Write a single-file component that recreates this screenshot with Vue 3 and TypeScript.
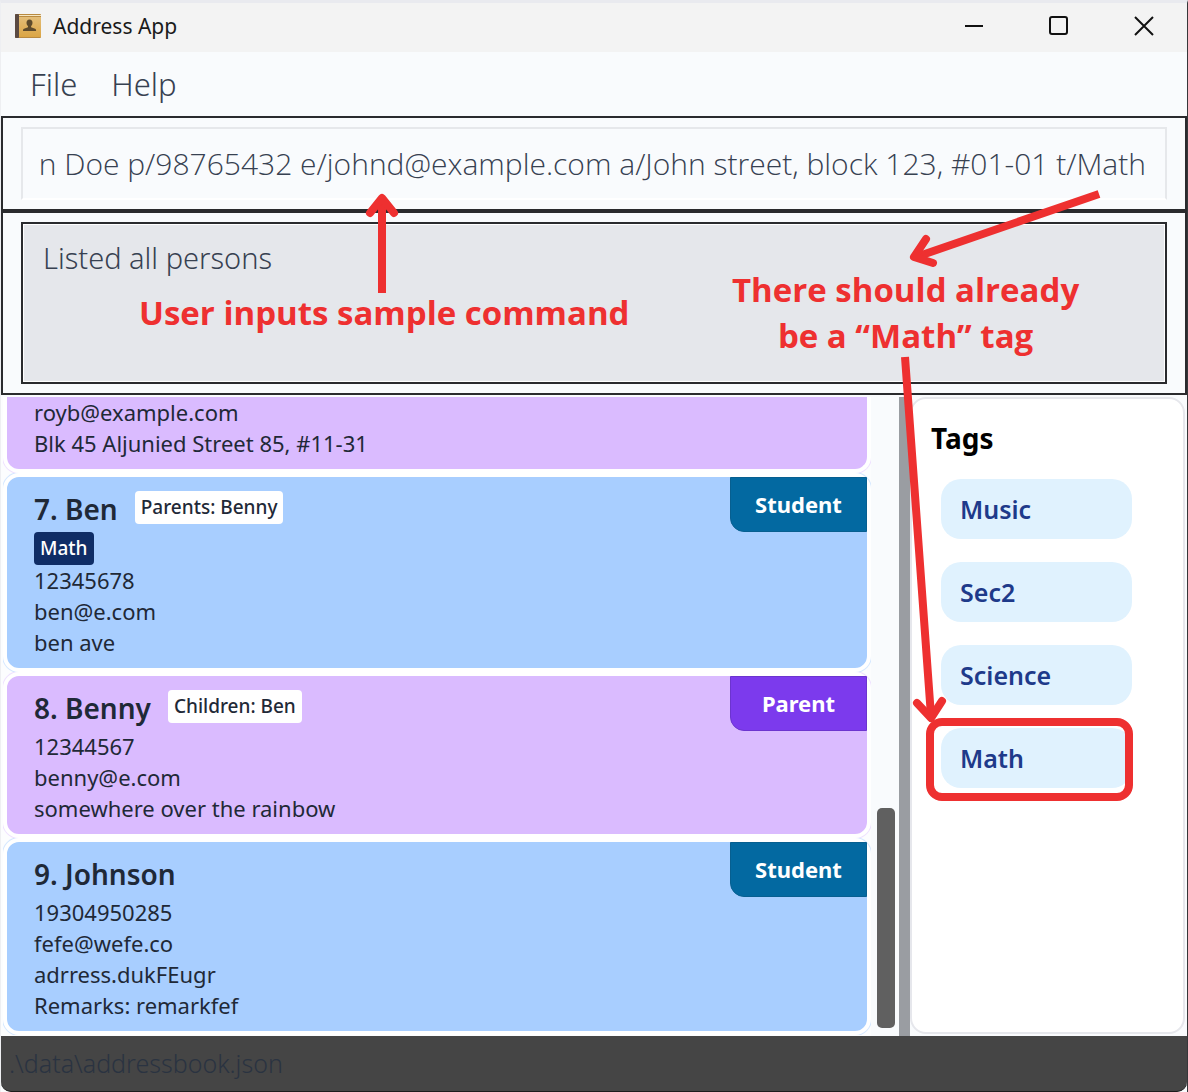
<script setup lang="ts">
import { onMounted, ref } from 'vue'

interface Person {
  name?: string
  role: 'Student' | 'Parent'
  relation?: string
  tags?: string[]
  details: string[]
}

const people: Person[] = [
  { role: 'Parent', details: ['royb@example.com', 'Blk 45 Aljunied Street 85, #11-31'] },
  {
    name: '7. Ben',
    role: 'Student',
    relation: 'Parents: Benny',
    tags: ['Math'],
    details: ['12345678', 'ben@e.com', 'ben ave'],
  },
  {
    name: '8. Benny',
    role: 'Parent',
    relation: 'Children: Ben',
    details: ['12344567', 'benny@e.com', 'somewhere over the rainbow'],
  },
  {
    name: '9. Johnson',
    role: 'Student',
    details: ['19304950285', 'fefe@wefe.co', 'adrress.dukFEugr', 'Remarks: remarkfef'],
  },
]

const tags = ['Music', 'Sec2', 'Science', 'Math']
const command = ref('John Doe p/98765432 e/johnd@example.com a/John street, block 123, #01-01 t/Math')
const commandBox = ref<HTMLInputElement | null>(null)

// Keep the end of the typed command in view.
onMounted(() => {
  if (commandBox.value) commandBox.value.scrollLeft = commandBox.value.scrollWidth
})
</script>

<template>
  <div class="window">
    <header class="titlebar">
      <svg class="book" viewBox="0 0 28 26" aria-hidden="true">
        <defs>
          <linearGradient id="cover" x1="0" y1="0" x2="0" y2="1">
            <stop offset="0" stop-color="#e3bd78" />
            <stop offset="1" stop-color="#dba544" />
          </linearGradient>
        </defs>
        <rect x="1" y="1" width="26" height="24" rx="1" fill="#b98a40" />
        <rect x="4" y="2" width="23" height="1" fill="#f6e7c2" />
        <rect x="5" y="4" width="22" height="20" fill="url(#cover)" />
        <rect x="1" y="1" width="4" height="24" rx="1" fill="#5b4a42" />
        <path d="M15.500 6.500c2 0 3 1.400 3 3.200 0 1.500-.6 2.700-1.400 3.400v1.200l4 1.500c.8.400 1 1 1 2.200H9c0-1.200.2-1.800 1-2.200l4-1.500v-1.200c-.9-.7-1.500-1.900-1.500-3.400 0-1.800 1-3.200 3-3.200z" fill="#5d4a2c" />
      </svg>
      <h1>Address App</h1>
      <div class="controls">
        <button type="button" aria-label="Minimize">
          <svg viewBox="0 0 20 20"><path d="M1 10h18" /></svg>
        </button>
        <button type="button" aria-label="Maximize">
          <svg viewBox="0 0 20 20"><rect x="1" y="1" width="17" height="17" rx="2" /></svg>
        </button>
        <button type="button" aria-label="Close">
          <svg viewBox="0 0 20 20"><path d="M1 1l18 18M19 1L1 19" /></svg>
        </button>
      </div>
    </header>

    <nav class="menu">
      <button type="button">File</button>
      <button type="button">Help</button>
    </nav>

    <section class="pane">
      <input ref="commandBox" v-model="command" class="command" type="text" aria-label="Command" />
    </section>
    <section class="pane result-pane">
      <div class="result">Listed all persons</div>
    </section>

    <main class="content">
      <ul class="people">
        <li v-for="(p, i) in people" :key="i">
          <article :class="['card', p.role.toLowerCase()]">
            <template v-if="p.name">
              <div class="heading">
                <h2>{{ p.name }}</h2>
                <span v-if="p.relation" class="relation">{{ p.relation }}</span>
              </div>
              <span class="role">{{ p.role }}</span>
            </template>
            <div v-if="p.tags" class="card-tags">
              <span v-for="t in p.tags" :key="t">{{ t }}</span>
            </div>
            <p v-for="d in p.details" :key="d">{{ d }}</p>
          </article>
        </li>
      </ul>
      <div class="gutter"><div class="thumb"></div></div>
      <div class="divider"></div>
      <aside class="tags">
        <h2>Tags</h2>
        <button v-for="t in tags" :key="t" type="button">{{ t }}</button>
      </aside>
    </main>

    <footer class="status">.\data\addressbook.json</footer>

    <p class="note note-input">User inputs sample command</p>
    <p class="note note-tag">There should already<br />be a “Math” tag</p>
    <svg class="marks" width="1188" height="1092" viewBox="0 0 1188 1092" aria-hidden="true">
      <path d="M382 293V200M1099 194L916 257M905 357L931 716" />
      <g stroke-linecap="round" stroke-linejoin="round">
        <path d="M370 213L382 198L394 213" />
        <path d="M926 239L914 257L933 263" />
        <path d="M917 703L931 718L942 701" />
      </g>
      <rect x="930" y="722" width="199" height="75" rx="12" />
    </svg>
  </div>
</template>

<style>
body {
  margin: 0;
  background: #f9fbfd;
}
</style>

<style scoped>
* {
  box-sizing: border-box;
}
h1,
h2,
p,
ul {
  margin: 0;
  padding: 0;
}
button {
  border: 0;
  padding: 0;
  background: none;
  font: inherit;
  color: inherit;
}
.window {
  position: relative;
  display: flex;
  flex-direction: column;
  min-height: 100vh;
  overflow: hidden;
  border-top: 3px solid #e9eaef;
  border-left: 1px solid #eeeff2;
  border-right: 1px solid #36373a;
  background: #f9fbfd;
  color: #1f2937;
  font-family: 'Noto Sans', 'Open Sans', sans-serif;
}
.titlebar {
  display: flex;
  align-items: center;
  height: 49px;
  padding: 0 0 4px 13px;
  background: #f3f3f3;
  color: #1a1a1a;
}
.book {
  width: 28px;
  height: 26px;
}
.titlebar h1 {
  margin-left: 11px;
  font-size: 21px;
  font-weight: 400;
}
.controls {
  display: flex;
  gap: 65px;
  margin: 0 33px 0 auto;
}
.controls button,
.controls svg {
  display: block;
  width: 20px;
  height: 20px;
}
.controls svg {
  fill: none;
  stroke: #111;
  stroke-width: 2;
}
.menu {
  display: flex;
  gap: 34px;
  height: 64px;
  padding-left: 29px;
  font-size: 31px;
  font-weight: 300;
  color: #374151;
}
.pane {
  padding: 9px 18px;
  border: 2px solid #2a2b2e;
}
.command {
  display: block;
  width: 100%;
  height: 73px;
  padding: 0 19px 0 17px;
  border: 2px solid #e6e8eb;
  border-bottom-color: #fff;
  background: #f9fbfd;
  color: #374151;
  font: 300 30px 'Open Sans', 'Noto Sans', sans-serif;
  outline: 0;
}
.result {
  height: 162px;
  padding: 12px 20px;
  border: 2px solid #2a2b2e;
  box-shadow: inset 0 0 0 1px #fff;
  background: #e5e7eb;
  color: #374151;
  font-size: 29px;
  font-weight: 300;
  line-height: 44px;
}
.content {
  flex: 1;
  display: flex;
  margin-top: 2px;
}
.people {
  flex: 1;
  display: flex;
  flex-direction: column;
  padding-left: 2px;
  background: #fcfdfe;
  list-style: none;
}
.people li {
  overflow: hidden;
}
.card {
  position: relative;
  padding: 14px 27px 10px;
  border: 4px solid #fff;
  border-radius: 16px;
}
.people li:first-child .card {
  padding-top: 0;
  border-top: 0;
  border-top-left-radius: 0;
  border-top-right-radius: 0;
}
.student {
  background: #a8ceff;
  box-shadow: 0 0 0 1px #d6e8ff;
}
.parent {
  background: #dabbff;
  box-shadow: 0 0 0 1px #efe2ff;
}
.card p {
  font-size: 22px;
  line-height: 31px;
}
.heading {
  display: flex;
  align-items: flex-start;
  gap: 17px;
  height: 36px;
  margin-bottom: 5px;
}
.heading h2 {
  font-size: 28px;
  font-weight: 600;
  line-height: 36px;
}
.relation,
.card-tags span {
  padding: 0 6px;
  border-radius: 4px;
  font-size: 19px;
  font-weight: 500;
  line-height: 33px;
}
.relation {
  background: #fff;
}
.card-tags {
  display: flex;
  gap: 6px;
}
.card-tags span {
  background: #0f2d66;
  color: #fff;
}
.role {
  position: absolute;
  top: 0;
  right: 0;
  width: 137px;
  border: 1px solid #075f90;
  border-radius: 0 0 0 14px;
  background: #0369a1;
  color: #fff;
  font-size: 22px;
  font-weight: 700;
  line-height: 53px;
  text-align: center;
}
.parent .role {
  border-color: #6c34cf;
  background: #7c3aed;
}
.gutter {
  display: flex;
  flex-direction: column;
  justify-content: flex-end;
  width: 28px;
  padding: 0 4px 8px 6px;
}
.thumb {
  height: 220px;
  border-radius: 5px;
  background: #606060;
}
.divider {
  width: 11px;
  background: #9a9da2;
}
.tags {
  display: flex;
  flex-direction: column;
  gap: 23px;
  width: 275px;
  margin: 0 2px 2px 0;
  padding: 21px 51px 0 29px;
  border: 2px solid #e6e7ec;
  border-radius: 16px;
  background: #fff;
}
.tags h2 {
  margin-left: -10px;
  color: #000;
  font-size: 28px;
  font-weight: 700;
  line-height: 36px;
}
.tags button {
  height: 60px;
  padding-left: 19px;
  border-radius: 20px;
  background: #e0f2fe;
  color: #1e3a8a;
  font-size: 25px;
  font-weight: 600;
  text-align: left;
}
.status {
  height: 56px;
  padding-left: 8px;
  border-bottom: 1px solid #1c1c1c;
  border-radius: 0 0 10px 10px;
  background: #454545;
  color: #2a3341;
  font-size: 25px;
  font-weight: 300;
  line-height: 54px;
}
.note {
  position: absolute;
  color: #ee3030;
  font-family: 'Open Sans', sans-serif;
  font-size: 33px;
  font-weight: 700;
  line-height: 46px;
  white-space: nowrap;
}
.note-input {
  top: 287px;
  left: 138px;
}
.note-tag {
  top: 264px;
  left: 731px;
  text-align: center;
}
.marks {
  position: absolute;
  top: -3px;
  left: -1px;
  fill: none;
  stroke: #ee3030;
  stroke-width: 8;
  pointer-events: none;
}
</style>
